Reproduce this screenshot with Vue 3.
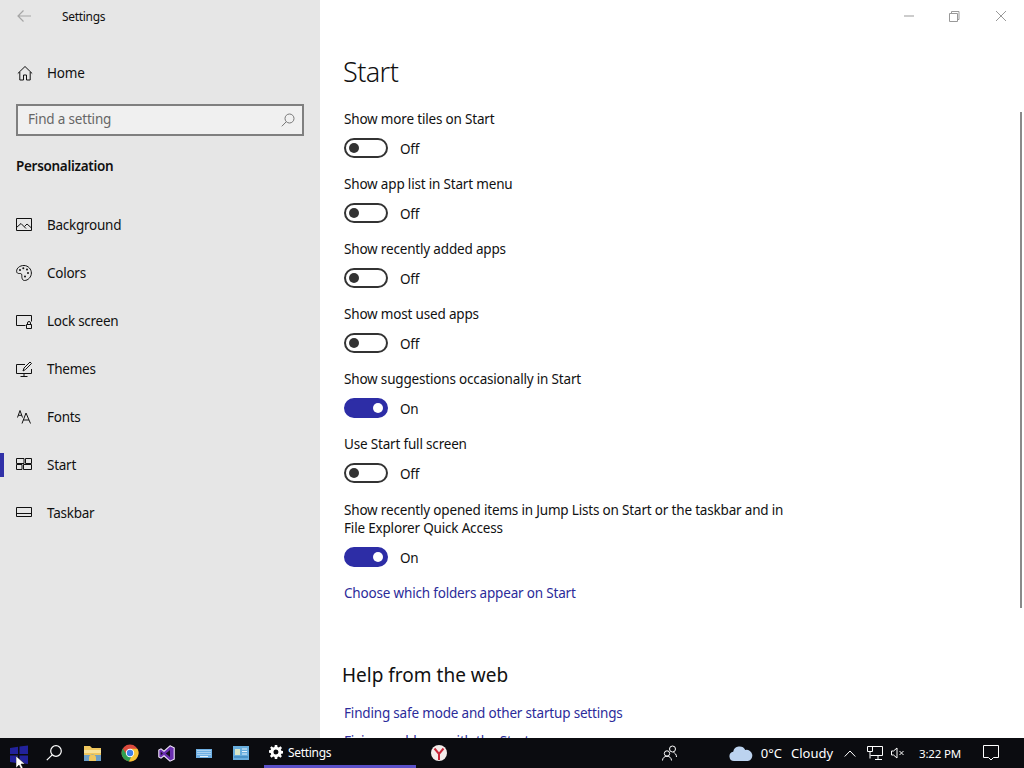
<script setup>
const nav = [
  { name: 'Background', icon: 'bg' },
  { name: 'Colors', icon: 'colors' },
  { name: 'Lock screen', icon: 'lock' },
  { name: 'Themes', icon: 'themes' },
  { name: 'Fonts', icon: 'fonts' },
  { name: 'Start', icon: 'start', active: true },
  { name: 'Taskbar', icon: 'taskbar' },
]
const settings = [
  { label: 'Show more tiles on Start', on: false },
  { label: 'Show app list in Start menu', on: false },
  { label: 'Show recently added apps', on: false },
  { label: 'Show most used apps', on: false },
  { label: 'Show suggestions occasionally in Start', on: true },
  { label: 'Use Start full screen', on: false },
  { label: 'Show recently opened items in Jump Lists on Start or the taskbar and in File Explorer Quick Access', on: true, long: true },
]
</script>

<template>
  <div class="screen">
    <div class="window">
      <aside class="sidebar">
        <div class="titlebar">
          <svg class="back" width="16" height="16" viewBox="0 0 16 16"><path d="M15 8H2M7.500 2.500 2 8l5.500 5.500" fill="none" stroke="#a6a6a6" stroke-width="1.200"/></svg>
          <span class="apptitle">Settings</span>
        </div>
        <div class="home">
          <svg width="16" height="16" viewBox="0 0 16 16" fill="none" stroke="#111" stroke-width="1"><path d="M.8 8.500 8 1.500l7.200 7M2.800 7v8h3.700v-5h3v5h3.700V7"/></svg>
          <span>Home</span>
        </div>
        <div class="search">
          <span>Find a setting</span>
          <svg width="14" height="14" viewBox="0 0 14 14" fill="none" stroke="#777" stroke-width="1"><circle cx="8.500" cy="5.500" r="4.500"/><path d="M5.300 8.700.8 13.300"/></svg>
        </div>
        <div class="section">Personalization</div>
        <nav class="nav">
          <div v-for="item in nav" :key="item.name" class="nav-item" :class="{ active: item.active }">
            <svg width="16" height="16" viewBox="0 0 16 16" fill="none" stroke="#111" stroke-width="1">
              <template v-if="item.icon === 'bg'">
                <path d="M.5 1.500h15v12H.5zM.5 10.500l4.500-4 5 5M8.500 9.500l2.500-2.500 4.500 4"/>
              </template>
              <template v-else-if="item.icon === 'colors'">
                <path d="M8 .5C3.500.5.600 3.200.6 6.300c0 1.700 1.400 2.300 2.700 2.200 1.500-.1 2.500.2 2.500 1.500 0 1.300-.2 5.500 2.700 5.500 3.500 0 6.900-3.500 6.900-7.500 0-3.600-3.100-7.500-7.400-7.500Z"/>
                <circle cx="4" cy="5" r="1" fill="#111" stroke="none"/><circle cx="7.300" cy="3.200" r="1" fill="#111" stroke="none"/><circle cx="11" cy="4.500" r="1" fill="#111" stroke="none"/><circle cx="12" cy="8" r="1" fill="#111" stroke="none"/><circle cx="9" cy="11.500" r="1" fill="#111" stroke="none"/>
              </template>
              <template v-else-if="item.icon === 'lock'">
                <path d="M9.500 12.500H.5v-10h15v6M10.500 11.500h5v4h-5zM11.500 11.500V10a1.500 1.500 0 0 1 3 0v1.500"/>
              </template>
              <template v-else-if="item.icon === 'themes'">
                <path d="M9 3.500H.5v9h15V8M4.500 15.500h7M8 12.500v3M7 10l1-3 6-6 1.500 1.500-6 6Z"/>
              </template>
              <template v-else-if="item.icon === 'fonts'">
                <path d="M1.500 8.500 4 1.500l2.500 7M2.300 6.300h3.400M6 14.500 10 4l4.500 10.500M7.300 11h5.700"/>
              </template>
              <template v-else-if="item.icon === 'start'">
                <path d="M.5 1.500h7.500v5H.5zM9.500 1.500h6v5h-6zM.5 7.500h5.500v5H.5zM7.500 7.500h8v5h-8z"/>
              </template>
              <template v-else>
                <path d="M.5 2.500h15v9H.5zM.5 8.500h15"/>
              </template>
            </svg>
            <span>{{ item.name }}</span>
          </div>
        </nav>
      </aside>

      <main class="main">
        <div class="controls">
          <svg width="46" height="32" viewBox="0 0 46 32"><path d="M18 16h10" stroke="#999" fill="none"/></svg>
          <svg width="46" height="32" viewBox="0 0 46 32" fill="none" stroke="#999"><path d="M17.500 13.500h8v8h-8zM19.500 13.500v-2h7.500v8h-1.500"/></svg>
          <svg width="46" height="32" viewBox="0 0 46 32" fill="none" stroke="#999"><path d="M18 11l10 10M28 11 18 21"/></svg>
        </div>
        <h1 class="page-title">Start</h1>
        <div class="settings">
          <div v-for="s in settings" :key="s.label" class="setting" :class="{ long: s.long }">
            <div class="label">{{ s.label }}</div>
            <div class="toggle-row">
              <span class="toggle" :class="{ on: s.on }"><i class="knob"></i></span>
              <span class="state">{{ s.on ? 'On' : 'Off' }}</span>
            </div>
          </div>
        </div>
        <a class="link first">Choose which folders appear on Start</a>
        <h2 class="help">Help from the web</h2>
        <a class="link">Finding safe mode and other startup settings</a>
        <a class="link next">Fixing problems with the Start menu</a>
      </main>
      <div class="scrollbar"></div>
    </div>

    <footer class="taskbar">
      <div class="tb start-btn"><svg width="18" height="19" viewBox="0 0 18 19" fill="#22229c"><path d="M0 3 8 1.800V9H0zM9.500 1.600 18 .4V9H9.500zM0 10.500h8v7.700L0 17zM9.500 10.500H18V19l-8.500-1z"/></svg></div>
      <div class="tb search-btn"><svg width="16" height="16" viewBox="0 0 16 16" fill="none" stroke="#fff" stroke-width="1.200"><circle cx="10" cy="6" r="5.300"/><path d="M6.200 9.800.8 15.200"/></svg></div>
      <div class="tb"><svg width="17" height="15" viewBox="0 0 17 15"><path d="M0 0h6l2 2h9v13H0z" fill="#f0c75e"/><path d="M0 4h17v3H0z" fill="#f8e29c"/><path d="M5 15v-3a3.500 3.500 0 0 1 7 0v3h5V9H0v6z" fill="#6c9fc8"/></svg></div>
      <div class="tb"><svg width="18" height="18" viewBox="0 0 18 18"><circle cx="9" cy="9" r="8.500" fill="#dd4b3e"/><path d="M1.800 4.400A8.500 8.500 0 0 0 8 17.400L11.500 11 5 9.500z" fill="#2f9e4f"/><path d="M16.400 4.800H9L12 9l-4 8.400A8.500 8.500 0 0 0 16.400 4.800z" fill="#f6c435"/><circle cx="9" cy="9" r="4.200" fill="#fff"/><circle cx="9" cy="9" r="3.200" fill="#3f80e8"/></svg></div>
      <div class="tb"><svg width="17" height="17" viewBox="0 0 17 17"><path d="M12 .8 16.200 2.800v11.400L12 16.200 6 10.800 3 13.200 .8 12V5L3 3.800 6 6.200z" fill="#6a2fb0" stroke="#efe6f8" stroke-width="1.100"/><path d="M12 5v7L7.800 8.500z" fill="#14101c"/><path d="M2.800 6.800v3.400L4.800 8.500z" fill="#14101c"/></svg></div>
      <div class="tb"><svg width="16" height="9" viewBox="0 0 16 9"><rect width="16" height="9" fill="#6fb0e4"/><path d="M1.500 1.500h13M1.500 3.500h13M1.500 5.500h13" stroke="#e6f3fb" stroke-dasharray="1 1"/><path d="M4 7.500h8" stroke="#e6f3fb"/></svg></div>
      <div class="tb"><svg width="16" height="14" viewBox="0 0 16 14"><rect width="16" height="14" fill="#68aede"/><rect x="2" y="3" width="5" height="6" fill="#d8e6c8"/><path d="M9 3h5M9 5.500h5M9 8h5" stroke="#e6f3fb"/><path d="M1 11h14" stroke="#2d78b0"/></svg></div>
      <div class="task">
        <svg width="14" height="14" viewBox="0 0 14 14"><path fill-rule="evenodd" fill="#fff" d="M5.800 0h2.400l.3 1.900 1.300.6L11.500 1.300 13 3l-1.200 1.500.5 1.300 1.700.2v2.400l-1.700.3-.5 1.300L13 11l-1.500 1.700-1.700-1.100-1.300.5L8.200 14H5.800l-.3-1.900-1.300-.5-1.700 1.100L1 11l1.200-1.700-.5-1.300L0 7.700V5.300l1.700-.3.500-1.300L1 2.900 2.500 1.300l1.700 1.200 1.300-.6zM7 4.500a2.500 2.500 0 1 0 0 5 2.500 2.500 0 0 0 0-5z"/></svg>
        <span>Settings</span>
      </div>
      <div class="tb yandex"><svg width="16" height="16" viewBox="0 0 16 16"><circle cx="8" cy="8" r="8" fill="#f4ecea"/><path d="M3.500 3.500 8 9l4.500-5.500M8 9v6" fill="none" stroke="#c8283a" stroke-width="2"/></svg></div>
      <div class="spacer"></div>
      <div class="tray">
        <svg class="people" width="16" height="16" viewBox="0 0 16 16" fill="none" stroke="#fff"><circle cx="10.500" cy="4" r="3"/><path d="M14.500 12c0-2.500-1.500-4-3-4.500"/><circle cx="5" cy="8.500" r="2.700"/><path d="M.5 15.500c0-2.500 2-4.300 4.500-4.300s4.500 1.800 4.500 4.300"/></svg>
        <svg class="cloud" width="24" height="15" viewBox="0 0 24 15"><path d="M5 15a4.700 4.700 0 0 1-.8-9.300A6.500 6.500 0 0 1 16.300 4 5.500 5.500 0 0 1 19 15z" fill="#bcd3ef"/></svg>
        <span class="temp">0°C</span>
        <span class="cond">Cloudy</span>
        <svg class="chev" width="12" height="7" viewBox="0 0 12 7" fill="none" stroke="#fff"><path d="M.7 6.500 6 1l5.300 5.500"/></svg>
        <svg class="net" width="16" height="14" viewBox="0 0 16 14" fill="none" stroke="#fff"><path d="M3.500.5h12v9H3.500M8 13.500h7M11 9.500v4M.5.500h5v5h-5zM3 5.500v7"/></svg>
        <svg class="vol" width="14" height="12" viewBox="0 0 14 12" fill="none" stroke="#fff"><path d="M.5 4v4h2L6 11V1L2.500 4zM8.500 4l4 4M12.500 4l-4 4"/></svg>
        <span class="clock">3:22 PM</span>
        <svg class="note" width="16" height="16" viewBox="0 0 16 16" fill="none" stroke="#fff"><path d="M.5.500h15v12h-5L8 15l-2.500-2.500h-5z"/></svg>
      </div>
    </footer>
    <svg class="cursor" width="11" height="13" viewBox="0 0 11 13"><path d="M0 0v12l3-3 2 4 2-1-2-4h4z" fill="#fff" stroke="#000" stroke-width=".5"/></svg>
  </div>
</template>

<style scoped>
.screen { width: 1024px; height: 768px; display: flex; flex-direction: column; overflow: hidden; position: relative; font-family: "Noto Sans", sans-serif; font-size: 13.5px; letter-spacing: -0.18px; color: #111; background: #fff; }
.window { flex: 1; min-height: 0; display: flex; overflow: hidden; position: relative; }
.sidebar { width: 320px; flex: none; background: #e6e6e6; }
.titlebar { height: 32px; display: flex; align-items: center; }
.back { margin-left: 16px; }
.apptitle { margin-left: 30px; font-size: 12px; letter-spacing: -0.3px; }
.home { height: 48px; margin-top: 17px; display: flex; align-items: center; padding-left: 17px; gap: 14px; }
.search { margin: 7px 16px 0; height: 32px; box-sizing: border-box; border: 2px solid #7f7f7f; background: #f0f0f0; display: flex; align-items: center; justify-content: space-between; padding: 0 7px 0 10px; color: #666; }
.search span { line-height: 18px; margin-bottom: 2px; }
.section { margin: 20px 16px 0; font-weight: 600; line-height: 20px; letter-spacing: -0.3px; }
.nav { margin-top: 25px; }
.nav-item { height: 48px; display: flex; align-items: center; gap: 15px; padding-left: 16px; position: relative; letter-spacing: -0.26px; }
.nav-item.active::before { content: ""; position: absolute; left: 0; top: 12px; width: 4px; height: 24px; background: #3131a8; }
.main { flex: 1; min-width: 0; padding-left: 24px; }
.controls { display: flex; justify-content: flex-end; height: 32px; }
.page-title { margin: 21px 0 0 -1px; font-size: 27px; font-weight: 300; line-height: 38px; letter-spacing: -0.6px; }
.settings { margin-top: 19px; display: flex; flex-direction: column; gap: 17px; }
.label { line-height: 18px; width: 460px; }
.toggle-row { display: flex; align-items: center; margin-top: 10px; }
.setting.long { margin-top: 1px; }
.toggle { width: 44px; height: 20px; box-sizing: border-box; border: 2px solid #333; border-radius: 10px; display: flex; align-items: center; padding: 0 3px; }
.knob { width: 10px; height: 10px; border-radius: 50%; background: #333; }
.toggle.on { background: #2d2da6; border-color: #2d2da6; justify-content: flex-end; }
.toggle.on .knob { background: #fff; }
.state { margin: 2px 0 0 12px; }
.link { display: block; color: #2b2b9a; line-height: 18px; }
.link.first { margin-top: 17px; }
.link.next { margin-top: 10px; }
.help { margin: 59px 0 0 -2px; font-size: 19px; font-weight: 400; line-height: 28px; letter-spacing: 0; }
.help + .link { margin-top: 15px; }
.scrollbar { position: absolute; left: 1020px; top: 112px; width: 2px; height: 496px; background: #8a8a8a; }
.taskbar { height: 30px; flex: none; background: #0b0c10; display: flex; align-items: center; color: #fff; }
.tb { width: 37px; height: 30px; display: flex; align-items: center; justify-content: center; flex: none; }
.start-btn svg { margin-top: 3px; }
.search-btn svg { margin-right: 3px; }
.task { width: 152px; height: 30px; margin-left: 5px; box-sizing: border-box; border-bottom: 3px solid #5a50c8; display: flex; align-items: center; padding-left: 5px; gap: 5px; font-size: 12px; flex: none; letter-spacing: -0.3px; }
.task span { margin-top: 1px; }
.yandex { margin-left: 4px; }
.spacer { flex: 1; }
.tray { display: flex; align-items: center; height: 30px; font-size: 13px; letter-spacing: 0; }
.cloud { margin-left: 51px; }
.temp { margin-left: 8px; }
.cond { margin-left: 9px; }
.chev { margin-left: 11px; }
.net { margin-left: 11px; }
.vol { margin-left: 8px; }
.clock { margin-left: 14px; font-size: 11.500px; letter-spacing: -0.18px; }
.note { margin: 0 25px 0 22px; }
.cursor { position: absolute; left: 16px; top: 756px; }
</style>
